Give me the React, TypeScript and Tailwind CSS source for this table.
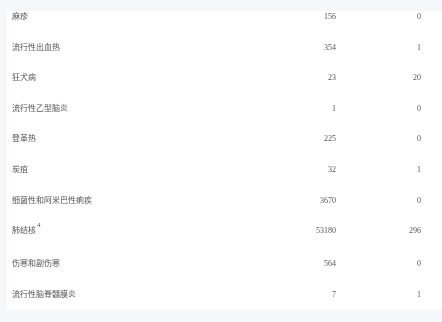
import React from "react";

const rows: { name: string; sup?: string; a: string; b: string; h: string }[] = [
  { name: "麻疹", a: "156", b: "0", h: "h-[30.6px]" },
  { name: "流行性出血热", a: "354", b: "1", h: "h-[30.6px]" },
  { name: "狂犬病", a: "23", b: "20", h: "h-[30.6px]" },
  { name: "流行性乙型脑炎", a: "1", b: "0", h: "h-[30.6px]" },
  { name: "登革热", a: "225", b: "0", h: "h-[30.6px]" },
  { name: "炭疽", a: "32", b: "1", h: "h-[30.6px]" },
  { name: "细菌性和阿米巴性痢疾", a: "3670", b: "0", h: "h-[30.6px]" },
  { name: "肺结核", sup: "4", a: "53180", b: "296", h: "h-[33px]" },
  { name: "伤寒和副伤寒", a: "564", b: "0", h: "h-[30.6px]" },
  { name: "流行性脑脊髓膜炎", a: "7", b: "1", h: "h-[30.6px]" },
];

export default function App() {
  return (
    <div className="w-[442px] h-[322px] overflow-hidden bg-[#f5f7fa] pl-[7px] pt-[11px] antialiased">
      <div
        className="h-[299px] overflow-hidden bg-white text-[8px] leading-[12px] text-[#555]"
        style={{ fontFamily: '"Liberation Serif", "Noto Sans CJK SC", serif' }}
      >
        <div className="[will-change:transform]">
          {rows.map((r) => (
            <div key={r.name} className={`flex items-start ${r.h}`}>
              <div className="w-[274px] pl-[5px] whitespace-nowrap">
                {r.name}
                {r.sup && (
                  <span className="relative -top-[6px] ml-[1px] text-[7px] leading-none">{r.sup}</span>
                )}
              </div>
              <div className="w-[55px] text-right">{r.a}</div>
              <div className="w-[85px] text-right">{r.b}</div>
            </div>
          ))}
        </div>
      </div>
    </div>
  );
}
